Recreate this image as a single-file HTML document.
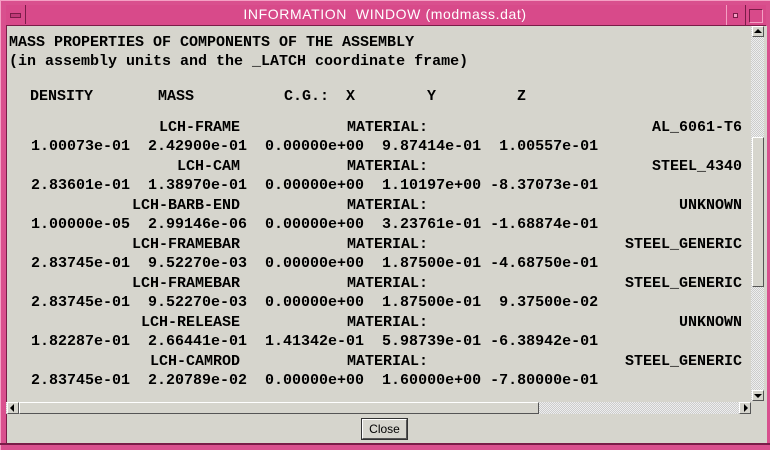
<!DOCTYPE html>
<html><head><style>
body{margin:0;width:770px;height:450px;overflow:hidden;background:#d6d5cd;position:relative;font-family:"Liberation Mono",monospace;}
.a{position:absolute;}
.t{position:absolute;font:bold 15px/19px "Liberation Mono",monospace;color:#000;white-space:pre;}
.r{text-align:right;}
.chk{background-color:#eee;background-image:linear-gradient(45deg,#ccc 25%,transparent 25%,transparent 75%,#ccc 75%),linear-gradient(45deg,#ccc 25%,transparent 25%,transparent 75%,#ccc 75%);background-size:2px 2px;background-position:0 0,1px 1px;}
.btn{position:absolute;background:#d6d5cd;border-top:1px solid #fff;border-left:1px solid #fff;border-right:1px solid #555;border-bottom:1px solid #555;box-sizing:border-box;}
</style></head><body>
<div class="a" style="left:0;top:0;width:770px;height:450px;background:#d9508e;"></div>
<div class="a" style="left:0;top:0;width:770px;height:1px;background:#f4a0c4;"></div>
<div class="a" style="left:0;top:0;width:1px;height:450px;background:#f4a0c4;"></div>
<div class="a" style="left:6px;top:5px;width:760px;height:20px;background:#d84a8a;border-bottom:1px solid #7a1c48;"></div>
<div class="a" style="left:6px;top:5px;width:19px;height:19px;border-right:1px solid #7a1c48;"></div>
<div class="a" style="left:10px;top:13px;width:9px;height:3px;background:#c03a78;border:1px solid #7a1c48;"></div>
<div class="a" style="left:726px;top:5px;width:18px;height:20px;border-left:1px solid #f4a0c4;border-right:1px solid #7a1c48;"></div>
<div class="a" style="left:733px;top:13px;width:3px;height:3px;border:1px solid #7a1c48;background:#f4a0c4;"></div>
<div class="a" style="left:749px;top:9px;width:12px;height:12px;border:1px solid #7a1c48;border-right-color:#f4a0c4;border-bottom-color:#f4a0c4;"></div>
<div class="a" style="left:0;top:6px;width:770px;text-align:center;color:#fff;font:14px/16px 'Liberation Sans',sans-serif;letter-spacing:0.6px;">INFORMATION&nbsp; WINDOW (modmass.dat)</div>
<div class="a" style="left:6px;top:26px;width:760px;height:417px;background:#d6d5cd;border-left:1px solid #7a1c48;"></div>
<div class="a" style="left:0;top:443px;width:770px;height:2px;background:#7a1c48;"></div>

<div class="t" style="left:9px;top:33px;">MASS PROPERTIES OF COMPONENTS OF THE ASSEMBLY</div>
<div class="t" style="left:9px;top:52px;">(in assembly units and the _LATCH coordinate frame)</div>
<div class="t" style="left:30px;top:87px;">DENSITY</div>
<div class="t" style="left:158px;top:87px;">MASS</div>
<div class="t" style="left:284px;top:87px;">C.G.:</div>
<div class="t" style="left:346px;top:87px;">X</div>
<div class="t" style="left:427px;top:87px;">Y</div>
<div class="t" style="left:517px;top:87px;">Z</div>

<div class="t r" style="left:0;width:240px;top:118px;">LCH-FRAME</div>
<div class="t" style="left:347px;top:118px;">MATERIAL:</div>
<div class="t r" style="left:500px;width:242px;top:118px;">AL_6061-T6</div>
<div class="t" style="left:31px;top:137px;">1.00073e-01  2.42900e-01  0.00000e+00  9.87414e-01  1.00557e-01</div>

<div class="t r" style="left:0;width:240px;top:157px;">LCH-CAM</div>
<div class="t" style="left:347px;top:157px;">MATERIAL:</div>
<div class="t r" style="left:500px;width:242px;top:157px;">STEEL_4340</div>
<div class="t" style="left:31px;top:176px;">2.83601e-01  1.38970e-01  0.00000e+00  1.10197e+00 -8.37073e-01</div>

<div class="t r" style="left:0;width:240px;top:196px;">LCH-BARB-END</div>
<div class="t" style="left:347px;top:196px;">MATERIAL:</div>
<div class="t r" style="left:500px;width:242px;top:196px;">UNKNOWN</div>
<div class="t" style="left:31px;top:215px;">1.00000e-05  2.99146e-06  0.00000e+00  3.23761e-01 -1.68874e-01</div>

<div class="t r" style="left:0;width:240px;top:235px;">LCH-FRAMEBAR</div>
<div class="t" style="left:347px;top:235px;">MATERIAL:</div>
<div class="t r" style="left:500px;width:242px;top:235px;">STEEL_GENERIC</div>
<div class="t" style="left:31px;top:254px;">2.83745e-01  9.52270e-03  0.00000e+00  1.87500e-01 -4.68750e-01</div>

<div class="t r" style="left:0;width:240px;top:274px;">LCH-FRAMEBAR</div>
<div class="t" style="left:347px;top:274px;">MATERIAL:</div>
<div class="t r" style="left:500px;width:242px;top:274px;">STEEL_GENERIC</div>
<div class="t" style="left:31px;top:293px;">2.83745e-01  9.52270e-03  0.00000e+00  1.87500e-01  9.37500e-02</div>

<div class="t r" style="left:0;width:240px;top:313px;">LCH-RELEASE</div>
<div class="t" style="left:347px;top:313px;">MATERIAL:</div>
<div class="t r" style="left:500px;width:242px;top:313px;">UNKNOWN</div>
<div class="t" style="left:31px;top:332px;">1.82287e-01  2.66441e-01  1.41342e-01  5.98739e-01 -6.38942e-01</div>

<div class="t r" style="left:0;width:240px;top:352px;">LCH-CAMROD</div>
<div class="t" style="left:347px;top:352px;">MATERIAL:</div>
<div class="t r" style="left:500px;width:242px;top:352px;">STEEL_GENERIC</div>
<div class="t" style="left:31px;top:371px;">2.83745e-01  2.20789e-02  0.00000e+00  1.60000e+00 -7.80000e-01</div>

<div class="a chk" style="left:751px;top:26px;width:13px;height:375px;"></div>
<div class="btn" style="left:752px;top:26px;width:12px;height:11px;"></div>
<div class="a" style="left:754px;top:29px;width:0;height:0;border-left:4px solid transparent;border-right:4px solid transparent;border-bottom:4px solid #000;"></div>
<div class="btn" style="left:752px;top:137px;width:12px;height:150px;"></div>
<div class="btn" style="left:752px;top:390px;width:12px;height:11px;"></div>
<div class="a" style="left:754px;top:394px;width:0;height:0;border-left:4px solid transparent;border-right:4px solid transparent;border-top:4px solid #000;"></div>
<div class="a chk" style="left:6px;top:402px;width:745px;height:12px;"></div>
<div class="btn" style="left:7px;top:402px;width:12px;height:12px;"></div>
<div class="a" style="left:10px;top:404px;width:0;height:0;border-top:4px solid transparent;border-bottom:4px solid transparent;border-right:4px solid #000;"></div>
<div class="btn" style="left:19px;top:402px;width:520px;height:12px;"></div>
<div class="btn" style="left:739px;top:402px;width:12px;height:12px;"></div>
<div class="a" style="left:744px;top:404px;width:0;height:0;border-top:4px solid transparent;border-bottom:4px solid transparent;border-left:4px solid #000;"></div>
<div class="a" style="left:361px;top:418px;width:47px;height:22px;border:1px solid #333;box-sizing:border-box;"></div>
<div class="btn" style="left:362px;top:419px;width:45px;height:20px;font:12px/18px 'Liberation Sans',sans-serif;text-align:center;">Close</div>
</body></html>
